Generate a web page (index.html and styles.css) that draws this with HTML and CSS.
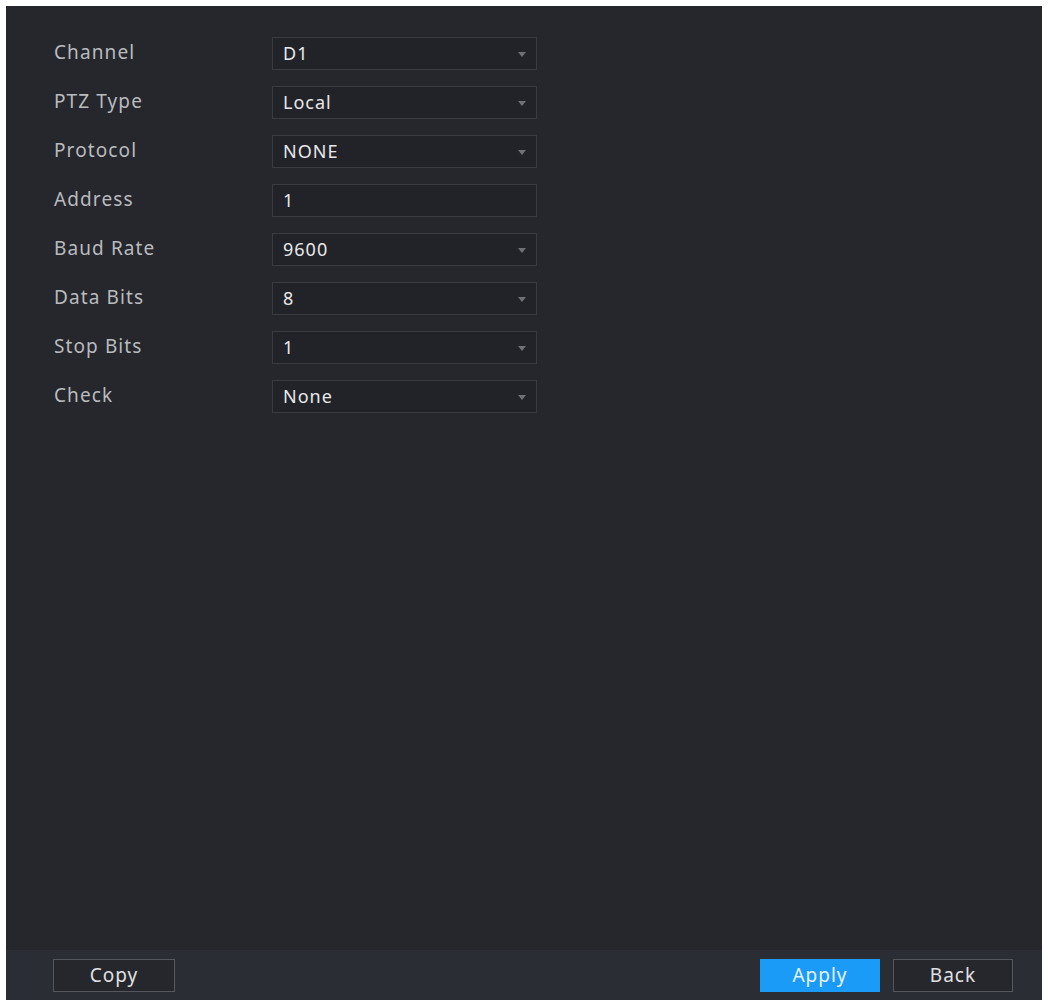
FILE: index.html
```html
<!DOCTYPE html>
<html lang="en">

<head>
  <title>PTZ</title>
  <meta charset="UTF-8">
  <meta name="viewport" content="width=device-width, initial-scale=1">
  <link rel="stylesheet" href="styles.css">
</head>

<body>

  <div class="panel">
    <div class="form">
      <div class="row">
        <span class="label">Channel</span>
        <div class="field select">D1<span class="arrow"></span></div>
      </div>
      <div class="row">
        <span class="label">PTZ Type</span>
        <div class="field select">Local<span class="arrow"></span></div>
      </div>
      <div class="row">
        <span class="label">Protocol</span>
        <div class="field select">NONE<span class="arrow"></span></div>
      </div>
      <div class="row">
        <span class="label">Address</span>
        <div class="field">1</div>
      </div>
      <div class="row">
        <span class="label">Baud Rate</span>
        <div class="field select">9600<span class="arrow"></span></div>
      </div>
      <div class="row">
        <span class="label">Data Bits</span>
        <div class="field select">8<span class="arrow"></span></div>
      </div>
      <div class="row">
        <span class="label">Stop Bits</span>
        <div class="field select">1<span class="arrow"></span></div>
      </div>
      <div class="row">
        <span class="label">Check</span>
        <div class="field select">None<span class="arrow"></span></div>
      </div>
    </div>

    <div class="footer">
      <button class="btn">Copy</button>
      <div class="spacer"></div>
      <button class="btn primary">Apply</button>
      <button class="btn">Back</button>
    </div>
  </div>

</body>

</html>
```

FILE: styles.css
```css
body {
  margin: 0;
  background: #ffffff;
  font-family: "Noto Sans", "Open Sans", sans-serif;
}

.panel {
  margin: 6px;
  width: 1036px;
  height: 994px;
  background: #25272c;
  display: flex;
  flex-direction: column;
}

.form {
  flex: 1;
  padding: 31px 0 0 48px;
  display: flex;
  flex-direction: column;
  gap: 16px;
}

.row {
  display: flex;
  align-items: center;
  height: 33px;
}

.label {
  width: 218px;
  padding-bottom: 4px;
  color: #b9bbbf;
  font-size: 19px;
  letter-spacing: 1.1px;
}

.field {
  position: relative;
  box-sizing: border-box;
  width: 265px;
  height: 33px;
  padding: 0 10px;
  background: #212328;
  border: 1px solid #393b41;
  color: #e8e8ea;
  font-size: 18px;
  letter-spacing: 1px;
  line-height: 30px;
}

.arrow {
  position: absolute;
  right: 10px;
  top: 14px;
  width: 0;
  height: 0;
  border-left: 4px solid transparent;
  border-right: 4px solid transparent;
  border-top: 5px solid #6f7178;
}

.footer {
  height: 50px;
  background: #2b2d34;
  display: flex;
  align-items: center;
  padding: 0 29px 0 47px;
  gap: 13px;
}

.spacer {
  flex: 1;
}

.btn {
  width: 120px;
  height: 33px;
  background: #25272d;
  border: 1px solid #55575e;
  color: #e0e0e2;
  font-family: "Noto Sans", "Open Sans", sans-serif;
  font-size: 19px;
  letter-spacing: 1px;
  cursor: pointer;
}

.btn:first-child {
  width: 122px;
}

.btn.primary {
  background: #1a9bf7;
  border-color: #1a9bf7;
  color: #e6f2ff;
}
```
